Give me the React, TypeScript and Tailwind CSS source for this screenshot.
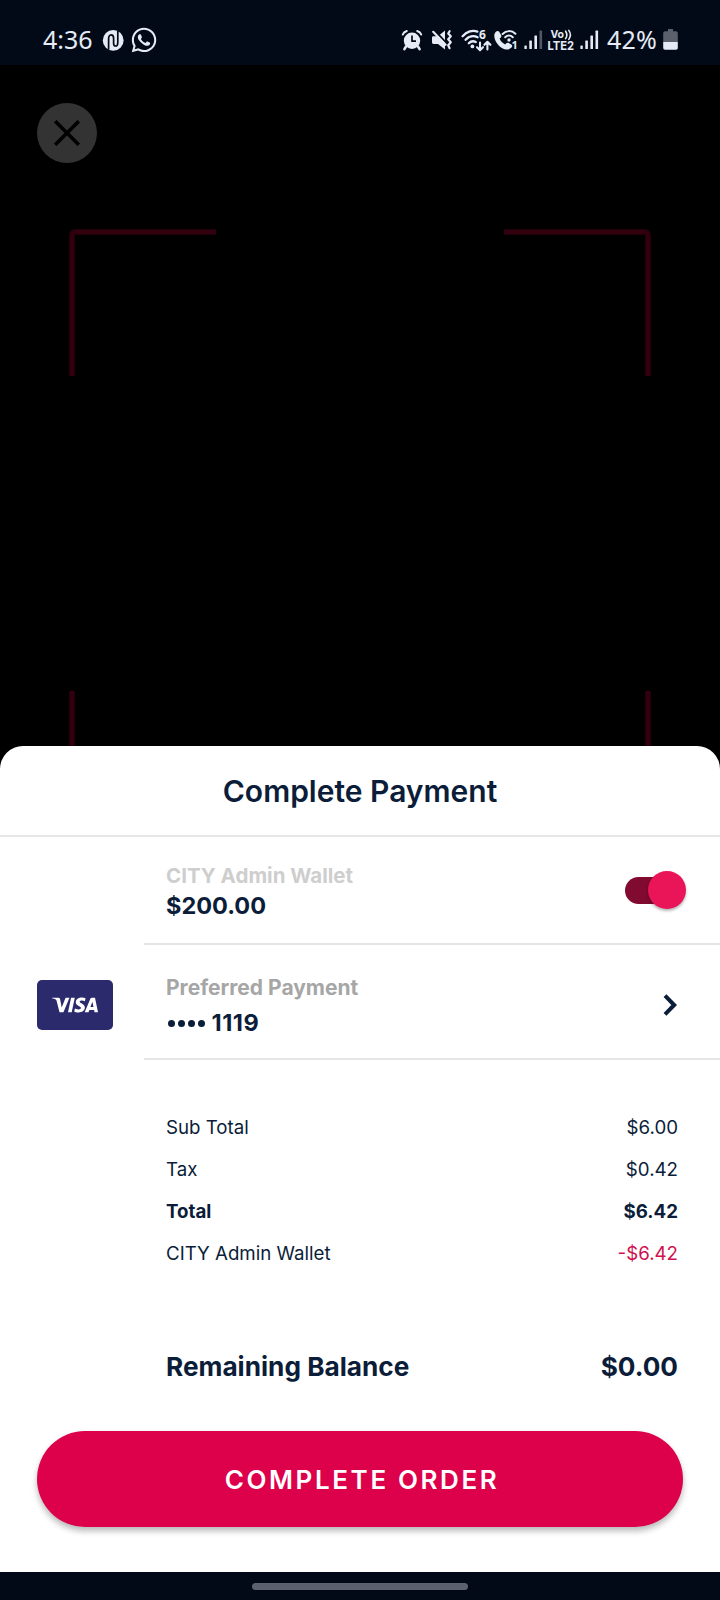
import type { ReactNode } from "react";
import clsx from "clsx";
import { FaWhatsapp } from "react-icons/fa";
import { SiVisa } from "react-icons/si";

interface SummaryLine {
  label: string;
  amount: string;
  bold?: boolean;
  credit?: boolean;
}

const SUMMARY: SummaryLine[] = [
  { label: "Sub Total", amount: "$6.00" },
  { label: "Tax", amount: "$0.42" },
  { label: "Total", amount: "$6.42", bold: true },
  { label: "CITY Admin Wallet", amount: "-$6.42", credit: true },
];

function SignalBars({ weak }: { weak?: boolean }) {
  return (
    <svg width="19" height="20" viewBox="0 0 19 20" fill="currentColor">
      <rect x="0.4" y="15.4" width="2.4" height="3.6" rx="0.6" />
      <rect x="5.3" y="10.6" width="2.6" height="8.4" rx="0.6" />
      <rect x="10.4" y="5.6" width="2.6" height="13.4" rx="0.6" />
      <rect x="15.5" y="0.6" width="2.6" height="18.4" rx="0.6" opacity={weak ? 0.35 : 1} />
    </svg>
  );
}

function StatusBar() {
  return (
    <div className="h-[65px] shrink-0 bg-[#020a18] text-[#e6ebf5] font-['Noto_Sans',sans-serif] flex items-start pl-[43px] pr-[42px] pt-[28px]">
      <span className="w-[49px] -mt-px text-[25px] leading-[24px]">4:36</span>

      {/* Swirl badge */}
      <svg className="ml-[10px] mt-[1px]" width="23" height="23" viewBox="0 0 23 23">
        <circle cx="11.2" cy="11.4" r="10.4" fill="currentColor" />
        <path
          d="M6.6 20.8V10c0-2.6 1-4.2 2.6-4.2s2.4 1.4 2.4 3.400v5c0 1.800.6 2.800 1.900 2.800s2.300-1.200 2.300-3.600V2"
          fill="none"
          stroke="#020a18"
          strokeWidth="1.7"
        />
      </svg>
      <FaWhatsapp size={28} className="ml-[5px] -mt-[2px]" />

      <div className="ml-auto flex items-start">
        {/* Alarm */}
        <svg className="mt-[1px]" width="22" height="22" viewBox="0 0 22 22">
          <circle cx="11" cy="11.8" r="8.2" fill="currentColor" />
          <path d="M5 17.5l-1.6 2.6M17 17.5l1.6 2.6" stroke="currentColor" strokeWidth="2.6" strokeLinecap="round" />
          <path d="M1.7 5.6C2.4 3.8 3.8 2.6 5.8 2M20.3 5.6C19.6 3.8 18.2 2.6 16.2 2" fill="none" stroke="currentColor" strokeWidth="1.9" strokeLinecap="round" />
          <path d="M11 6.6v5.6h4" fill="none" stroke="#020a18" strokeWidth="1.7" />
        </svg>

        {/* Muted, vibrate */}
        <svg className="ml-[8px] mt-[1px]" width="22" height="22" viewBox="0 0 22 22">
          <path d="M2.4 7.2H7L14 1.4v19.2L7 15H2.4A1.4 1.4 0 0 1 1 13.600v-5A1.400 1.400 0 0 1 2.400 7.200z" fill="currentColor" />
          <path d="M4 2l12 12.6" stroke="#020a18" strokeWidth="2" />
          <path d="M2.2 2.8l12.4 13" stroke="currentColor" strokeWidth="2.2" strokeLinecap="round" />
          <path d="M18.6 2.2l-1.4 2.3 2.6 2.8-2.6 3 2.6 2.9-2.6 3 1.4 3" fill="none" stroke="currentColor" strokeWidth="2.2" strokeLinejoin="round" strokeLinecap="round" />
        </svg>

        {/* Wi-Fi 6 */}
        <svg className="ml-[8px] -mt-[4px]" width="31" height="29" viewBox="0 -4 31 29">
          <g fill="none" stroke="currentColor" strokeWidth="2.3" strokeLinecap="round">
            <path d="M1.6 8.2C5.6 3.6 11.6 1.6 16.4 3.6" />
            <path d="M4.6 11.8c3-3.4 7.8-4.6 12-2.6" />
            <path d="M7.8 15.2c2-2 4.6-2.4 7-1.2" />
          </g>
          <circle cx="11.4" cy="18.4" r="1.9" fill="currentColor" />
          <text x="18" y="11.4" fontSize="12" fontWeight="700" fill="currentColor">6</text>
          <g fill="none" stroke="currentColor" strokeWidth="2.1" strokeLinecap="round" strokeLinejoin="round">
            <path d="M19 14.5v7.5M16 19.2l3 3 3-3" />
            <path d="M26.4 21.5V14M23.4 16.8l3-3 3 3" />
          </g>
        </svg>

        {/* Wi-Fi calling */}
        <svg className="ml-px" width="26" height="25" viewBox="0 0 26 25">
          <path
            d="M2.6 4C4 2.6 5.4 2.6 6.2 3.8l1.9 3.3c.5 1 .3 1.9-.5 2.6l-1 .8c1 2.8 2.9 4.6 5.6 5.9l1-1.1c.7-.7 1.6-.8 2.5-.3l2.6 1.6c1.3.8 1.3 2 0 3.2-4.3 3.6-9.3 1.2-12.8-2.6C1.8 13.2-.2 7.400 2.600 4z"
            fill="currentColor"
          />
          <g fill="none" stroke="currentColor" strokeWidth="2" strokeLinecap="round">
            <path d="M9.6 6c3.6-3.8 9.2-3.8 12.8-.2" />
            <path d="M12.2 9.2c2.2-2.2 5.4-2.2 7.6 0" />
          </g>
          <circle cx="16" cy="12" r="1.7" fill="currentColor" />
          <text x="18.6" y="21.2" fontSize="11" fontWeight="700" fill="currentColor">1</text>
        </svg>

        <div className="ml-[5px] mt-[2px]">
          <SignalBars weak />
        </div>

        {/* VoLTE, second SIM */}
        <svg className="ml-[4px] font-['Inter',sans-serif]" width="28" height="25" viewBox="0 0 28 25" fill="currentColor">
          <text x="3.4" y="10.4" fontSize="11" fontWeight="700" textLength="13.6" lengthAdjust="spacingAndGlyphs">Vo</text>
          <path d="M18.6 3.2c1.6 2.4 1.6 5 0 7.4M21.8 2.4c2 2.8 2 6.2 0 9" fill="none" stroke="currentColor" strokeWidth="1.6" strokeLinecap="round" />
          <text x="0.4" y="22" fontSize="12" fontWeight="700" textLength="26.6" lengthAdjust="spacingAndGlyphs">LTE2</text>
        </svg>

        <div className="ml-[5px] mt-[2px]">
          <SignalBars />
        </div>

        <span className="ml-[8px] -mt-px w-[54px] text-[25px] leading-[24px] tracking-[0.2px] whitespace-nowrap">42%</span>

        {/* Battery */}
        <svg className="ml-[2px] mt-[1px]" width="15" height="21" viewBox="0 0 15 21">
          <path d="M5 0h5v2.2h3a1.8 1.8 0 0 1 1.8 1.8V13H.2V4A1.8 1.8 0 0 1 2 2.2h3z" fill="#5b616c" />
          <path d="M.2 13h14.6v6a1.8 1.8 0 0 1-1.8 1.8H2A1.8 1.8 0 0 1 .2 19z" fill="currentColor" />
        </svg>
      </div>
    </div>
  );
}

function Scanner() {
  return (
    <div className="h-[681px] shrink-0 overflow-hidden pt-[37.5px]">
      <button className="ml-[37px] size-[60px] rounded-full bg-[#333333] flex items-center justify-center" aria-label="Close">
        <svg width="26" height="26" viewBox="0 0 26 26" fill="none" stroke="#000" strokeWidth="3.6">
          <path d="M1.2 1.2l23.6 23.6M24.8 1.2L1.2 24.8" />
        </svg>
      </button>

      {/* Viewfinder corners, the lower pair runs on behind the sheet */}
      <svg className="mt-[66px] ml-[69px]" width="582" height="610" viewBox="0 0 582 610" fill="none" stroke="#31000f" strokeWidth="5.5">
        <path d="M147 3H6a3 3 0 0 0-3 3v141" />
        <path d="M435 3H576a3 3 0 0 1 3 3v141" />
        <path d="M3 462v142a3 3 0 0 0 3 3h141" />
        <path d="M579 462v142a3 3 0 0 1-3 3H435" />
      </svg>
    </div>
  );
}

function PaymentRow({ icon, label, value, action, className }: {
  icon?: ReactNode;
  label: ReactNode;
  value: ReactNode;
  action: ReactNode;
  className?: string;
}) {
  return (
    <div className={clsx("flex", className)}>
      <div className="w-[144px] shrink-0 pl-[37px] pt-[5px] flex items-center">{icon}</div>
      <div className="flex-1 border-b-2 border-[#e6e6e6] pl-[22px] flex items-center justify-between">
        <div>
          {label}
          {value}
        </div>
        {action}
      </div>
    </div>
  );
}

export default function App() {
  return (
    <div className="w-[720px] h-[1600px] bg-black flex flex-col overflow-hidden font-['Inter',sans-serif] text-[#0b1d38]">
      <StatusBar />
      <Scanner />

      <div className="h-[826px] shrink-0 bg-white rounded-t-[23px] flex flex-col">
        <h1 className="h-[91px] shrink-0 border-b-2 border-[#e6e6e6] pt-[2px] flex items-center justify-center text-[30px] font-semibold">
          Complete Payment
        </h1>

        <PaymentRow
          className="h-[108px] shrink-0"
          label={<p className="pt-[2px] text-[20.5px] leading-[30px] font-bold text-[#cecece]">CITY Admin Wallet</p>}
          value={<p className="text-[23.5px] leading-[30px] font-bold">$200.00</p>}
          action={
            <div className="mr-[34.5px] w-[60.5px] h-[38px] flex items-center justify-end relative" role="switch" aria-checked="true">
              <div className="absolute left-0 h-[27px] w-[50px] rounded-full bg-[#800a30]" />
              <div className="relative size-[38px] rounded-full bg-[#ea1558] shadow-[0_2px_3px_rgba(0,0,0,0.3)]" />
            </div>
          }
        />

        <PaymentRow
          className="h-[115px] shrink-0"
          icon={
            <div className="w-[76px] h-[50px] rounded-[5px] bg-[#2a2a6c] text-white flex items-center justify-center">
              <SiVisa size={46} />
            </div>
          }
          label={<p className="pt-[7px] text-[21px] leading-[30px] font-bold text-[#a6a6a6]">Preferred Payment</p>}
          value={
            <p className="mt-[5px] text-[23.5px] leading-[30px] font-bold tracking-[0.5px] flex items-center">
              <span className="flex gap-[3px] mr-[7px] ml-[1.5px] mt-[2px]">
                <i className="size-[7px] rounded-full bg-current" />
                <i className="size-[7px] rounded-full bg-current" />
                <i className="size-[7px] rounded-full bg-current" />
                <i className="size-[7px] rounded-full bg-current" />
              </span>
              1119
            </p>
          }
          action={
            <svg className="mr-[43px] mt-[6px]" width="14" height="22" viewBox="0 0 14 22" fill="none" stroke="currentColor" strokeWidth="4">
              <path d="M2 1.6L11.2 11 2 20.4" />
            </svg>
          }
        />

        <div className="pt-[47px] pl-[166px] pr-[42px]">
          {SUMMARY.map((line) => (
            <div
              key={line.label}
              className={clsx("h-[42px] flex items-center justify-between text-[18.7px]", line.bold && "font-bold")}
            >
              <span>{line.label}</span>
              <span className={clsx(line.credit && "text-[#d0104f]")}>{line.amount}</span>
            </div>
          ))}
        </div>

        <div className="mt-[71px] pl-[166px] pr-[42px] h-[42px] flex items-center justify-between text-[26.2px] font-bold">
          <span>Remaining Balance</span>
          <span>$0.00</span>
        </div>

        <button className="mt-[42.5px] mx-[37px] h-[96.5px] shrink-0 rounded-full bg-[#dd004a] pl-[4px] pt-[2px] text-white text-[26px] font-semibold tracking-[2.6px] shadow-[0_4px_6px_rgba(0,0,0,0.28)]">
          COMPLETE ORDER
        </button>
      </div>

      <div className="h-[28px] shrink-0 bg-[#020a18] flex justify-center pt-[11px]">
        <div className="w-[216px] h-[7px] rounded-full bg-[#5b626d]" />
      </div>
    </div>
  );
}
